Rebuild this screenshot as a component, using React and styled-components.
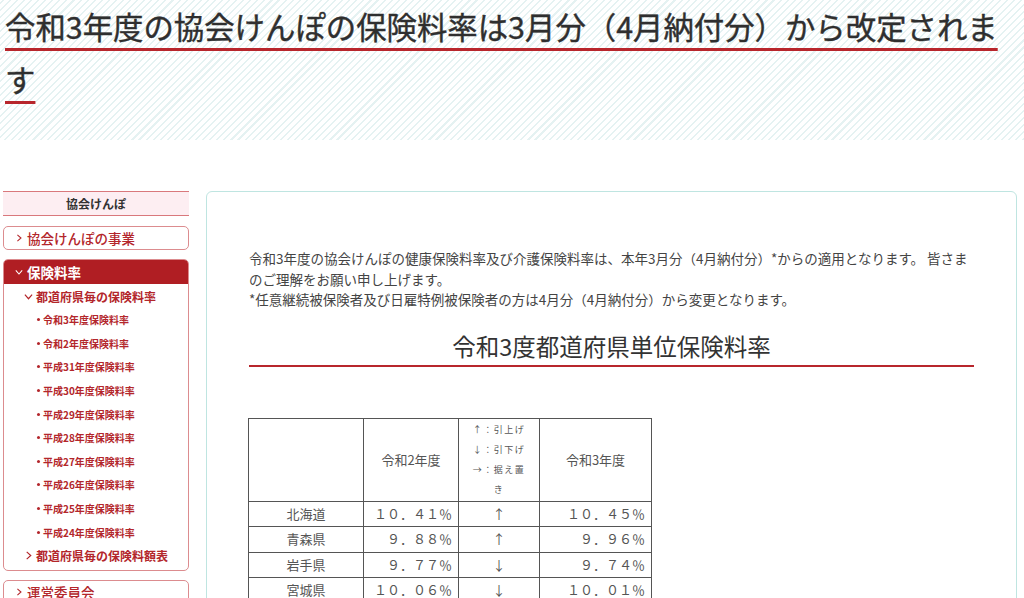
import React from "react";
import styled, { createGlobalStyle } from "styled-components";

const RED = "#b3262b";

const sideItems = [
  "令和3年度保険料率",
  "令和2年度保険料率",
  "平成31年度保険料率",
  "平成30年度保険料率",
  "平成29年度保険料率",
  "平成28年度保険料率",
  "平成27年度保険料率",
  "平成26年度保険料率",
  "平成25年度保険料率",
  "平成24年度保険料率",
];

const rates = [
  { pref: "北海道", prev: "１０．４１％", dir: "↑", cur: "１０．４５％" },
  { pref: "青森県", prev: "９．８８％", dir: "↑", cur: "９．９６％" },
  { pref: "岩手県", prev: "９．７７％", dir: "↓", cur: "９．７４％" },
  { pref: "宮城県", prev: "１０．０６％", dir: "↓", cur: "１０．０１％" },
];

function Chevron({ down, size = 8 }) {
  return (
    <ChevronSvg width={size} height={size} viewBox="0 0 10 10">
      {down ? (
        <polyline points="1,3 5,7.5 9,3" />
      ) : (
        <polyline points="3,1 7.5,5 3,9" />
      )}
    </ChevronSvg>
  );
}

function App() {
  return (
    <>
      <GlobalStyle />
      <Header>
        <Title>
          令和3年度の協会けんぽの保険料率は3月分（4月納付分）から改定されます
        </Title>
      </Header>
      <Body>
        <Sidebar>
          <SideTitle>協会けんぽ</SideTitle>
          <NavBox>
            <NavLink>
              <Chevron />
              協会けんぽの事業
            </NavLink>
          </NavBox>
          <NavBox>
            <NavLink $active>
              <Chevron down />
              保険料率
            </NavLink>
            <SubLink>
              <Chevron down size={9} />
              都道府県毎の保険料率
            </SubLink>
            <ItemList>
              {sideItems.map((t) => (
                <Item key={t}>{t}</Item>
              ))}
            </ItemList>
            <SubLink $last>
              <Chevron size={9} />
              都道府県毎の保険料額表
            </SubLink>
          </NavBox>
          <NavBox>
            <NavLink>
              <Chevron />
              運営委員会
            </NavLink>
          </NavBox>
        </Sidebar>
        <Panel>
          <Intro>
            令和3年度の協会けんぽの健康保険料率及び介護保険料率は、本年3月分（4月納付分）*からの適用となります。 皆さま
            <br />
            のご理解をお願い申し上げます。
            <br />
            *任意継続被保険者及び日雇特例被保険者の方は4月分（4月納付分）から変更となります。
          </Intro>
          <SectionTitle>令和3度都道府県単位保険料率</SectionTitle>
          <RateTable>
            <colgroup>
              <col style={{ width: 115 }} />
              <col style={{ width: 95 }} />
              <col style={{ width: 81 }} />
              <col style={{ width: 112 }} />
            </colgroup>
            <thead>
              <tr>
                <HeadCell />
                <HeadCell>令和2年度</HeadCell>
                <LegendCell>↑：引上げ ↓：引下げ →：据え置き</LegendCell>
                <HeadCell>令和3年度</HeadCell>
              </tr>
            </thead>
            <tbody>
              {rates.map((r) => (
                <tr key={r.pref}>
                  <Cell>{r.pref}</Cell>
                  <Cell $num>{r.prev}</Cell>
                  <Cell>{r.dir}</Cell>
                  <Cell $num>{r.cur}</Cell>
                </tr>
              ))}
            </tbody>
          </RateTable>
        </Panel>
      </Body>
    </>
  );
}

const GlobalStyle = createGlobalStyle`
  body {
    margin: 0;
    background: #fff;
    color: #333;
    font-family: "Noto Sans CJK JP", "Noto Sans", sans-serif;
  }
`;

const Header = styled.header`
  height: 140px;
  padding: 0 10px 0 5px;
  background: repeating-linear-gradient(
    -45deg,
    #e5f2f2 0 1.5px,
    #ffffff 1.5px 5px
  );
`;

const Title = styled.h1`
  margin: 0;
  font-size: 30.4px;
  font-weight: 400;
  line-height: 53px;
  color: #2f2f2f;
  -webkit-text-stroke: 0.4px #2f2f2f;
  text-decoration: underline;
  text-decoration-color: #b8262c;
  text-decoration-thickness: 3px;
  text-underline-offset: 9px;
  text-decoration-skip-ink: none;
`;

const Body = styled.div`
  display: flex;
  align-items: flex-start;
  gap: 17px;
  padding: 51px 7px 0 3px;
`;

const Sidebar = styled.nav`
  width: 186px;
  flex-shrink: 0;
`;

const SideTitle = styled.div`
  margin-bottom: 10px;
  border-top: 1px solid #d9787c;
  border-bottom: 1px solid #d9787c;
  background: #fdeef2;
  text-align: center;
  font-size: 12px;
  font-weight: 700;
  line-height: 23px;
  color: #333;
`;

const NavBox = styled.div`
  margin-bottom: 9px;
  border: 1px solid #dc8c8f;
  border-radius: 5px;
  overflow: hidden;
`;

const ChevronSvg = styled.svg`
  flex-shrink: 0;
  fill: none;
  stroke: currentColor;
  stroke-width: 1.3;
`;

const NavLink = styled.div`
  display: flex;
  align-items: center;
  gap: 4px;
  height: ${(p) => (p.$active ? "24px" : "22px")};
  padding-left: 11px;
  font-size: 13.5px;
  font-weight: ${(p) => (p.$active ? 700 : 500)};
  color: ${(p) => (p.$active ? "#fff" : RED)};
  background: ${(p) => (p.$active ? "#b01e23" : "transparent")};
`;

const SubLink = styled.div`
  display: flex;
  align-items: center;
  gap: 3px;
  height: 24px;
  padding-left: 20px;
  margin-bottom: ${(p) => (p.$last ? "2px" : 0)};
  font-size: 12px;
  font-weight: 700;
  color: ${RED};
`;

const ItemList = styled.ul`
  margin: 0;
  padding: 0 0 0 33px;
  list-style: none;
`;

const Item = styled.li`
  display: flex;
  align-items: center;
  gap: 3px;
  height: 23.6px;
  font-size: 10px;
  font-weight: 700;
  color: ${RED};

  &::before {
    content: "";
    width: 3px;
    height: 3px;
    border-radius: 50%;
    background: ${RED};
  }
`;

const Panel = styled.main`
  flex: 1;
  min-height: 520px;
  padding: 56px 42px 40px;
  border: 1px solid #bfe5e1;
  border-radius: 6px;
`;

const Intro = styled.p`
  margin: 0;
  font-size: 13.5px;
  line-height: 20.5px;
  color: #444;
`;

const SectionTitle = styled.h2`
  margin: 18px 0 0;
  font-size: 23.5px;
  font-weight: 400;
  line-height: 37px;
  text-align: center;
  color: #333;
  border-bottom: 2px solid #b8262c;
`;

const RateTable = styled.table`
  margin-top: 51px;
  margin-left: -1px;
  width: 403px;
  table-layout: fixed;
  border-collapse: collapse;
  color: #555;
  font-size: 13px;
`;

const HeadCell = styled.th`
  border: 1px solid #555;
  font-weight: 400;
  text-align: center;
`;

const LegendCell = styled.th`
  border: 1px solid #555;
  padding: 1px 10px;
  font-size: 9px;
  font-weight: 400;
  letter-spacing: 1.5px;
  line-height: 20px;
  text-align: center;
`;

const Cell = styled.td`
  border: 1px solid #555;
  padding: 2px 6px;
  line-height: 20.5px;
  text-align: ${(p) => (p.$num ? "right" : "center")};
`;

export default App;
